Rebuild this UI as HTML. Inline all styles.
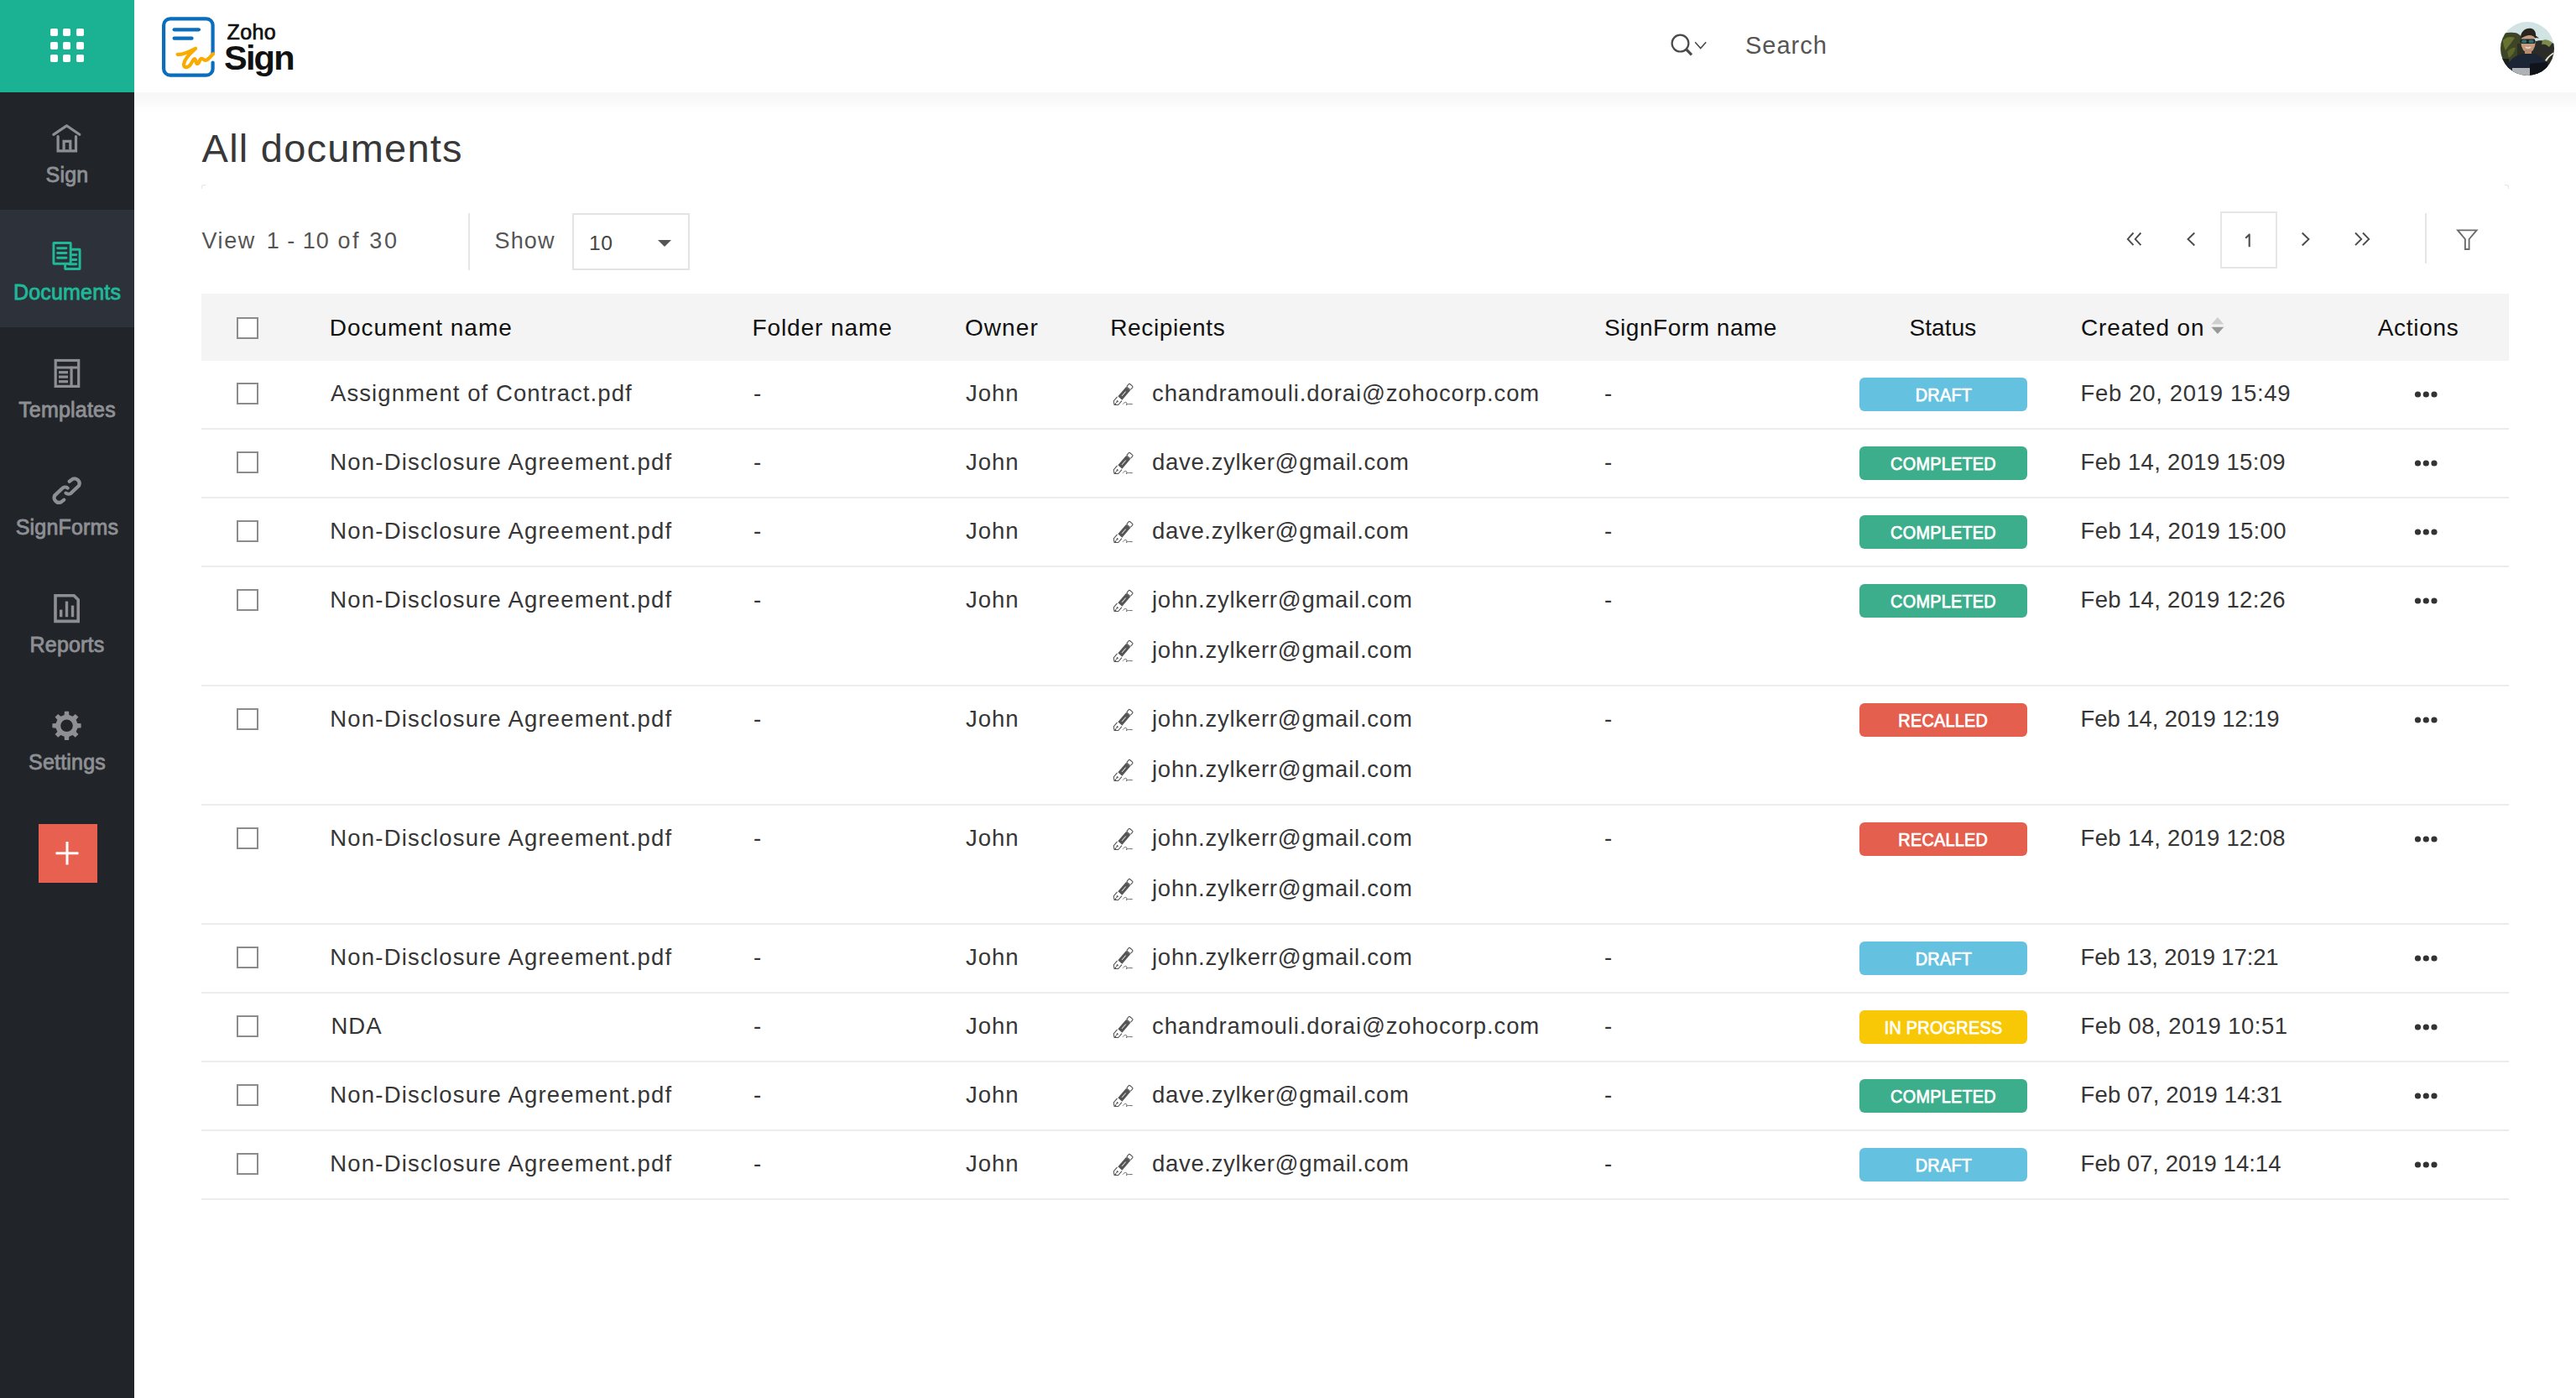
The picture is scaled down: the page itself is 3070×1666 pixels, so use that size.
<!DOCTYPE html>
<html><head><meta charset="utf-8"><title>Zoho Sign - All documents</title>
<style>
*{box-sizing:border-box;margin:0;padding:0}
html,body{width:3070px;height:1666px;overflow:hidden;background:#fff;font-family:"Liberation Sans",sans-serif;}
.a{position:absolute;white-space:pre}
#side{position:absolute;left:0;top:0;width:160px;height:1666px;background:#212428}
#apps{position:absolute;left:0;top:0;width:160px;height:110px;background:#1bb294}
.dot{position:absolute;width:9px;height:9px;background:#fff;border-radius:2px}
.nav{position:absolute;left:0;width:160px;height:140px}
.nav.act{background:#2d3139}
.nav svg{position:absolute;left:55px;top:30px}
.nav .lbl{position:absolute;left:0;width:160px;text-align:center;top:68px;line-height:60px;font-size:25px;color:#8e8f94;-webkit-text-stroke:0.85px #8e8f94;letter-spacing:0.2px}
.nav.act .lbl{color:#1fb898;-webkit-text-stroke:0.85px #1fb898}
#plus{position:absolute;left:46px;top:982px;width:70px;height:70px;background:#e8604f}
#hdr{position:absolute;left:160px;top:0;width:2910px;height:110px;background:#fff}
#shadow{position:absolute;left:160px;top:110px;width:2910px;height:23px;background:linear-gradient(#f7f7f7,#f9f9f9 40%,#fdfdfd 75%,#fff)}
.cb{position:absolute;width:26px;height:26px;border:2px solid #8c8c8c;background:#fff}
.t{position:absolute;font-size:27.5px;line-height:60px;color:#363636;white-space:pre;letter-spacing:1px}
.badge{position:absolute;width:200px;height:40px;border-radius:6px;color:#fff;text-align:center;white-space:pre}
.badge span{display:inline-block;font-size:21.5px;line-height:40px;transform:scaleX(0.925);-webkit-text-stroke:0.75px #fff;letter-spacing:0.25px;position:relative;top:1px}
</style></head>
<body>
<div id="side"><div id="apps"><div class="dot" style="left:59.5px;top:34px"></div><div class="dot" style="left:75px;top:34px"></div><div class="dot" style="left:90.5px;top:34px"></div><div class="dot" style="left:59.5px;top:49.5px"></div><div class="dot" style="left:75px;top:49.5px"></div><div class="dot" style="left:90.5px;top:49.5px"></div><div class="dot" style="left:59.5px;top:65px"></div><div class="dot" style="left:75px;top:65px"></div><div class="dot" style="left:90.5px;top:65px"></div></div><div class="nav" style="top:110px"><svg width="50" height="50" viewBox="0 0 50 50"><g fill="none" stroke="#8e8f94" stroke-width="3.2">
<polyline points="8.8,20.3 24.4,9.8 39.8,20.3" stroke-linecap="round" stroke-linejoin="round"/>
<polyline points="14.1,22.6 14.1,39.8 35.5,39.8 35.5,22.6" stroke-linecap="round"/>
<polyline points="21.1,38.5 21.1,28.4 28.8,28.4 28.8,38.5"/></g></svg><div class="lbl">Sign</div></div><div class="nav act" style="top:250px"><svg width="50" height="50" viewBox="0 0 50 50"><g fill="none" stroke="#1fb898" stroke-width="2.9" stroke-linejoin="round">
<rect x="22.6" y="17.3" width="17.5" height="23.2" rx="0.4"/>
<rect x="8.9" y="9.5" width="20.3" height="24.7" rx="0.4" fill="#2d3139"/>
<g stroke-linecap="round"><line x1="13.6" y1="15.7" x2="23.9" y2="15.7"/><line x1="13.6" y1="21.5" x2="23.9" y2="21.5"/><line x1="13.6" y1="27.3" x2="23.9" y2="27.3"/>
<line x1="30.5" y1="23.6" x2="35.8" y2="23.6"/><line x1="30.5" y1="29.5" x2="35.8" y2="29.5"/><line x1="27" y1="34.8" x2="35.8" y2="34.8"/></g></g></svg><div class="lbl">Documents</div></div><div class="nav" style="top:390px"><svg width="50" height="50" viewBox="0 0 50 50"><g fill="none" stroke="#8e8f94" stroke-width="3.2">
<rect x="11.2" y="9.5" width="27.5" height="30.9"/>
<line x1="12.6" y1="18" x2="37.3" y2="18" stroke-linecap="round"/>
<line x1="30.1" y1="18" x2="30.1" y2="38.6" stroke-linecap="round"/>
<line x1="15" y1="23.7" x2="26" y2="23.7"/><line x1="15" y1="29.1" x2="26" y2="29.1"/><line x1="15" y1="34.7" x2="26" y2="34.7"/></g></svg><div class="lbl">Templates</div></div><div class="nav" style="top:530px"><svg width="50" height="50" viewBox="0 0 50 50"><g fill="none" stroke="#8e8f94" stroke-width="4.2" stroke-linecap="round">
<path d="M21.3 35.6 L17.4 38.6 A5.9 5.9 0 0 1 10.1 30.6 L18.6 22.6 A5.2 5.2 0 0 1 25.7 21.6"/>
<path d="M27.6 13.8 L31.6 10.8 A5.9 5.9 0 0 1 39.1 18.8 L30.6 26.8 A5.2 5.2 0 0 1 23.5 27.6"/></g></svg><div class="lbl">SignForms</div></div><div class="nav" style="top:670px"><svg width="50" height="50" viewBox="0 0 50 50"><g fill="none" stroke="#8e8f94" stroke-width="3.6">
<polygon points="11,9.8 33.2,9.8 38.2,14.8 38.2,40.4 11,40.4"/></g>
<g fill="#8e8f94"><rect x="16" y="26.6" width="3.4" height="8.6"/><rect x="22.8" y="16.6" width="3.4" height="18.6"/><rect x="29.8" y="21.6" width="3.4" height="13.6"/></g></svg><div class="lbl">Reports</div></div><div class="nav" style="top:810px"><svg width="50" height="50" viewBox="0 0 50 50"><path fill="#8e8f94" fill-rule="evenodd" d="M21.64,11.91 L21.94,7.69 L27.06,7.69 L27.36,11.91 L31.59,13.67 L34.79,10.89 L38.41,14.51 L35.63,17.71 L37.39,21.94 L41.61,22.24 L41.61,27.36 L37.39,27.66 L35.63,31.89 L38.41,35.09 L34.79,38.71 L31.59,35.93 L27.36,37.69 L27.06,41.91 L21.94,41.91 L21.64,37.69 L17.41,35.93 L14.21,38.71 L10.59,35.09 L13.37,31.89 L11.61,27.66 L7.39,27.36 L7.39,22.24 L11.61,21.94 L13.37,17.71 L10.59,14.51 L14.21,10.89 L17.41,13.67 Z M31.8,24.8 A7.3 7.3 0 1 0 17.2,24.8 A7.3 7.3 0 1 0 31.8,24.8 Z"/></svg><div class="lbl">Settings</div></div><div id="plus"><svg width="70" height="70" viewBox="0 0 70 70"><g stroke="#fff" stroke-width="3"><line x1="20.5" y1="34.8" x2="47.5" y2="34.8"/><line x1="34" y1="21" x2="34" y2="48.5"/></g></svg></div></div>
<div id="hdr"></div><div id="shadow"></div><svg class="a" style="left:185px;top:15px" width="80" height="80" viewBox="0 0 80 80">
<g fill="none" stroke-linecap="round" stroke-linejoin="round">
<path d="M68.6 48.6 V15 A7.6 7.6 0 0 0 61 7.4 H17.7 A7.6 7.6 0 0 0 10.1 15 V67 A7.6 7.6 0 0 0 17.7 74.6 H61 A7.6 7.6 0 0 0 68.6 67 V59.6" stroke="#0a6ebd" stroke-width="4.2"/>
<line x1="22.7" y1="20.3" x2="51.9" y2="20.3" stroke="#0a6ebd" stroke-width="4.3"/>
<line x1="22.7" y1="30.7" x2="43.5" y2="30.7" stroke="#0a6ebd" stroke-width="4.3"/>
<path d="M26.6 49.9 C32.5 50.5 40 47 48 42.8 C42 48 34.5 56 34 61.5 C34 66 38.5 66.5 42 62 L45.6 56 C47 54 48.2 56 48.6 59 C49.5 62 51.5 61.5 53 57 C54.5 53.5 56 55 58.5 56.5 C62 58 65.5 53 69 49.3" stroke="#f9ab00" stroke-width="4.2"/>
</g></svg><div class="a" style="left:270.5px;top:25.7px;font-size:25px;line-height:25px;color:#111;-webkit-text-stroke:0.7px #111;letter-spacing:0.4px">Zoho</div><div class="a" style="left:267px;top:47.5px;font-size:41.5px;line-height:41.5px;font-weight:bold;color:#111;letter-spacing:-1.8px">Sign</div><svg class="a" style="left:1985px;top:35px" width="55" height="40" viewBox="0 0 55 40">
<circle cx="17.5" cy="16.6" r="9.9" fill="none" stroke="#4a4a4a" stroke-width="2.2"/>
<line x1="24.2" y1="23.3" x2="31" y2="30.3" stroke="#4a4a4a" stroke-width="3.2"/>
<polyline points="35.2,15.2 41.7,22.6 48.2,15.2" fill="none" stroke="#4a4a4a" stroke-width="1.6"/></svg><div class="a" style="left:2080px;top:34px;font-size:29px;line-height:40px;color:#555;letter-spacing:1px">Search</div><svg class="a" style="left:2980px;top:26px" width="64" height="64" viewBox="0 0 64 64">
<defs><clipPath id="cc"><circle cx="32" cy="32" r="32"/></clipPath></defs>
<g clip-path="url(#cc)">
<rect width="64" height="64" fill="#d2e3e3"/>
<path d="M0 16 C4 13 10 12 16 13 C20 13 23 15 25 18 L27 40 L18 52 L0 58 Z" fill="#3e4526"/>
<path d="M3 22 C7 18 12 17 17 19 C14 24 10 28 6 34 C4 30 3 26 3 22 Z" fill="#66732f"/>
<path d="M8 36 C11 32 15 30 18 31 C17 36 14 40 10 43 Z" fill="#5a662a"/>
<rect x="20" y="26" width="24" height="16" fill="#2c3023"/>
<path d="M40 24 C46 21 54 22 64 26 L64 64 L40 64 Z" fill="#2b2c27"/>
<path d="M50 22 C54 20 58 22 62 25 L58 30 C55 27 52 26 49 27 Z" fill="#7d8a4a"/>
<path d="M53 46 C56 41 60 38 64 36 L64 38 C60 40 57 43 55 47 Z" fill="#e4e2cc"/>
<path d="M0 44 L10 44 L12 64 L0 64 Z" fill="#1c1f1c"/>
<ellipse cx="33" cy="25" rx="8.6" ry="11.5" fill="#c69a7f"/>
<rect x="29" y="33" width="8" height="6" fill="#b98b70"/>
<path d="M24.2 20 C23 11 31 6.5 37 8 C42 9.5 43 15 41.5 20 C39 15.5 33 14 24.2 20 Z" fill="#2a241f"/>
<path d="M40 15 L46 19.5 L41 19 Z" fill="#2a241f"/>
<rect x="23.5" y="20.6" width="18" height="5.4" rx="2.2" fill="#1a2226"/>
<rect x="25.2" y="21.6" width="6" height="3.6" rx="1.5" fill="#2f6f6a"/>
<rect x="33.6" y="21.6" width="6" height="3.6" rx="1.5" fill="#2f6f6a"/>
<path d="M30 30 C32 31.5 34 31.5 36 30" stroke="#f2e8e0" stroke-width="1.4" fill="none"/>
<path d="M5 64 C6 50 14 41 26 38 L40 38 C50 40 57 48 58 64 Z" fill="#1b2535"/>
<path d="M35 50 L56 48 L58 64 L35 64 Z" fill="#10141a"/>
<rect x="14" y="55" width="21" height="10" fill="#aeb2b4"/>
</g></svg>
<div class="a" style="left:240.6px;top:146.5px;font-size:47px;line-height:60px;color:#383838;letter-spacing:1.23px">All documents</div><div class="a" style="left:240.5px;top:266.5px;font-size:27px;line-height:40px;color:#555;letter-spacing:1.6px">View</div><div class="a" style="left:317.7px;top:266.5px;font-size:27px;line-height:40px;color:#555;letter-spacing:1px">1 - 10</div><div class="a" style="left:402.5px;top:266.5px;font-size:27px;line-height:40px;color:#555;letter-spacing:2.6px">of 30</div><div class="a" style="left:589.6px;top:266.5px;font-size:27px;line-height:40px;color:#555;letter-spacing:1.1px">Show</div><div class="a" style="left:558px;top:254px;width:2px;height:68px;background:#e6e6e6"></div><div class="a" style="left:682px;top:254px;width:140px;height:68px;border:2px solid #e3e3e3"></div><div class="a" style="left:702px;top:270.3px;font-size:24.6px;line-height:40px;color:#444;letter-spacing:0.5px">10</div><div class="a" style="left:784px;top:285.5px;width:0;height:0;border-left:8px solid transparent;border-right:8px solid transparent;border-top:8.5px solid #555"></div><svg class="a" style="left:2520px;top:250px" width="320" height="72" viewBox="2520 250 320 72">
<g fill="none" stroke="#4a4a4a" stroke-width="1.9">
<polyline points="2542.5,277.5 2535.8,284.9 2542.5,292.2"/><polyline points="2551.4,277.5 2544.7,284.9 2551.4,292.2"/>
<polyline points="2615.3,277.5 2607.5,285 2615.3,292.5"/>
<polyline points="2743.7,277.5 2751.5,285 2743.7,292.5"/>
<polyline points="2807,277.5 2814.2,284.9 2807,292.2"/><polyline points="2816,277.5 2823.2,284.9 2816,292.2"/>
</g></svg><div class="a" style="left:2646px;top:252px;width:68px;height:68px;border:2px solid #e6e6e6"></div><svg class="a" style="left:2660px;top:270px" width="30" height="30" viewBox="2660 270 30 30"><polyline points="2676.2,283.8 2680.7,279.4 2680.7,294.2" fill="none" stroke="#4d4d4d" stroke-width="2.1" stroke-linejoin="round"/></svg><div class="a" style="left:2890px;top:254px;width:2px;height:60px;background:#e6e6e6"></div><svg class="a" style="left:2920px;top:265px" width="40" height="40" viewBox="0 0 40 40"><polygon points="9,9.4 31.6,9.4 22.6,20 22.6,32 17.9,32 17.9,20" fill="none" stroke="#6b6b6b" stroke-width="1.9"/></svg><div class="a" style="left:240px;top:220px;width:5px;height:5px;border-left:1px solid #e6e6e6;border-top:1px solid #e6e6e6;border-top-left-radius:3px"></div><div class="a" style="left:2985px;top:220px;width:5px;height:5px;border-right:1px solid #e6e6e6;border-top:1px solid #e6e6e6;border-top-right-radius:3px"></div>
<div class="a" style="left:240px;top:350px;width:2750px;height:80px;background:#f4f4f4"></div><div class="cb" style="left:281.5px;top:378px"></div><div class="a" style="left:392.7px;top:361px;font-size:28px;line-height:60px;color:#111;letter-spacing:0.97px">Document name</div><div class="a" style="left:896.4px;top:361px;font-size:28px;line-height:60px;color:#111;letter-spacing:0.92px">Folder name</div><div class="a" style="left:1149.9px;top:361px;font-size:28px;line-height:60px;color:#111;letter-spacing:1.1px">Owner</div><div class="a" style="left:1323.2px;top:361px;font-size:28px;line-height:60px;color:#111;letter-spacing:0.64px">Recipients</div><div class="a" style="left:1911.9px;top:361px;font-size:28px;line-height:60px;color:#111;letter-spacing:0.53px">SignForm name</div><div class="a" style="left:2275.4px;top:361px;font-size:28px;line-height:60px;color:#111;letter-spacing:0.12px">Status</div><div class="a" style="left:2480px;top:361px;font-size:28px;line-height:60px;color:#111;letter-spacing:0.89px">Created on</div><div class="a" style="left:2833.7px;top:361px;font-size:28px;line-height:60px;color:#111;letter-spacing:0.7px">Actions</div><svg class="a" style="left:2630px;top:372px" width="24" height="32" viewBox="0 0 24 32"><polygon points="5.4,14.4 12.9,5.9 20.3,14.4" fill="#cfcfcf"/><polygon points="5.4,17.8 12.9,26 20.3,17.8" fill="#999"/></svg><div class="a" style="left:240px;top:510px;width:2750px;height:2px;background:#ececec"></div><div class="cb" style="left:281.5px;top:456px"></div><div class="t" style="left:394px;top:439px;letter-spacing:1.08px">Assignment of Contract.pdf</div><div class="t" style="left:898px;top:439px">-</div><div class="t" style="left:1151px;top:439px">John</div><svg class="a" style="left:1320px;top:449px" width="40" height="40" viewBox="0 0 40 40"><g fill="#555" stroke="#555">
<g transform="translate(8,33.5) rotate(-49.5)">
<rect x="10.5" y="-3.3" width="15" height="6.6" stroke="none"/>
<rect x="26" y="-3" width="5" height="6" rx="1.2" fill="none" stroke-width="1.1"/>
<line x1="14" y1="0" x2="21" y2="0" stroke="#fff" stroke-width="0.9"/>
<path d="M0 0 L3 -3.6 L9.6 -3.6 M0 0 L3 3.6 L9.6 3.6" fill="none" stroke-width="1.1"/>
<circle cx="5.6" cy="0" r="1.1" stroke="none"/>
<line x1="0.5" y1="0" x2="5" y2="0" stroke-width="0.8"/>
</g>
<path d="M18 32.6 C20 30.5 22 29.6 22.8 31.2 C23 32.5 22.4 33.8 22.4 33.8 C23.5 32 25 32.6 29.7 32.6" fill="none" stroke-width="0.9"/>
<path d="M7.3 34.2 L9.5 31.5 L10.5 32.8 Z" stroke="none"/>
</g></svg><div class="t" style="left:1373px;top:439px;letter-spacing:0.89px">chandramouli.dorai@zohocorp.com</div><div class="t" style="left:1912px;top:439px">-</div><div class="badge" style="left:2216px;top:450px;background:#64c1df"><span>DRAFT</span></div><div class="t" style="left:2479.6px;top:439px;letter-spacing:0.67px">Feb 20, 2019 15:49</div><svg class="a" style="left:2870px;top:460px" width="40" height="20" viewBox="0 0 40 20"><g fill="#333"><circle cx="11.5" cy="10" r="3.6"/><circle cx="21.3" cy="10" r="3.6"/><circle cx="31" cy="10" r="3.6"/></g></svg><div class="a" style="left:240px;top:592px;width:2750px;height:2px;background:#ececec"></div><div class="cb" style="left:281.5px;top:538px"></div><div class="t" style="left:393.3px;top:521px;letter-spacing:1.2px">Non-Disclosure Agreement.pdf</div><div class="t" style="left:898px;top:521px">-</div><div class="t" style="left:1151px;top:521px">John</div><svg class="a" style="left:1320px;top:531px" width="40" height="40" viewBox="0 0 40 40"><g fill="#555" stroke="#555">
<g transform="translate(8,33.5) rotate(-49.5)">
<rect x="10.5" y="-3.3" width="15" height="6.6" stroke="none"/>
<rect x="26" y="-3" width="5" height="6" rx="1.2" fill="none" stroke-width="1.1"/>
<line x1="14" y1="0" x2="21" y2="0" stroke="#fff" stroke-width="0.9"/>
<path d="M0 0 L3 -3.6 L9.6 -3.6 M0 0 L3 3.6 L9.6 3.6" fill="none" stroke-width="1.1"/>
<circle cx="5.6" cy="0" r="1.1" stroke="none"/>
<line x1="0.5" y1="0" x2="5" y2="0" stroke-width="0.8"/>
</g>
<path d="M18 32.6 C20 30.5 22 29.6 22.8 31.2 C23 32.5 22.4 33.8 22.4 33.8 C23.5 32 25 32.6 29.7 32.6" fill="none" stroke-width="0.9"/>
<path d="M7.3 34.2 L9.5 31.5 L10.5 32.8 Z" stroke="none"/>
</g></svg><div class="t" style="left:1373px;top:521px;letter-spacing:0.68px">dave.zylker@gmail.com</div><div class="t" style="left:1912px;top:521px">-</div><div class="badge" style="left:2216px;top:532px;background:#3dae8b"><span>COMPLETED</span></div><div class="t" style="left:2479.6px;top:521px;letter-spacing:0.32px">Feb 14, 2019 15:09</div><svg class="a" style="left:2870px;top:542px" width="40" height="20" viewBox="0 0 40 20"><g fill="#333"><circle cx="11.5" cy="10" r="3.6"/><circle cx="21.3" cy="10" r="3.6"/><circle cx="31" cy="10" r="3.6"/></g></svg><div class="a" style="left:240px;top:674px;width:2750px;height:2px;background:#ececec"></div><div class="cb" style="left:281.5px;top:620px"></div><div class="t" style="left:393.3px;top:603px;letter-spacing:1.2px">Non-Disclosure Agreement.pdf</div><div class="t" style="left:898px;top:603px">-</div><div class="t" style="left:1151px;top:603px">John</div><svg class="a" style="left:1320px;top:613px" width="40" height="40" viewBox="0 0 40 40"><g fill="#555" stroke="#555">
<g transform="translate(8,33.5) rotate(-49.5)">
<rect x="10.5" y="-3.3" width="15" height="6.6" stroke="none"/>
<rect x="26" y="-3" width="5" height="6" rx="1.2" fill="none" stroke-width="1.1"/>
<line x1="14" y1="0" x2="21" y2="0" stroke="#fff" stroke-width="0.9"/>
<path d="M0 0 L3 -3.6 L9.6 -3.6 M0 0 L3 3.6 L9.6 3.6" fill="none" stroke-width="1.1"/>
<circle cx="5.6" cy="0" r="1.1" stroke="none"/>
<line x1="0.5" y1="0" x2="5" y2="0" stroke-width="0.8"/>
</g>
<path d="M18 32.6 C20 30.5 22 29.6 22.8 31.2 C23 32.5 22.4 33.8 22.4 33.8 C23.5 32 25 32.6 29.7 32.6" fill="none" stroke-width="0.9"/>
<path d="M7.3 34.2 L9.5 31.5 L10.5 32.8 Z" stroke="none"/>
</g></svg><div class="t" style="left:1373px;top:603px;letter-spacing:0.68px">dave.zylker@gmail.com</div><div class="t" style="left:1912px;top:603px">-</div><div class="badge" style="left:2216px;top:614px;background:#3dae8b"><span>COMPLETED</span></div><div class="t" style="left:2479.6px;top:603px;letter-spacing:0.38px">Feb 14, 2019 15:00</div><svg class="a" style="left:2870px;top:624px" width="40" height="20" viewBox="0 0 40 20"><g fill="#333"><circle cx="11.5" cy="10" r="3.6"/><circle cx="21.3" cy="10" r="3.6"/><circle cx="31" cy="10" r="3.6"/></g></svg><div class="a" style="left:240px;top:816px;width:2750px;height:2px;background:#ececec"></div><div class="cb" style="left:281.5px;top:702px"></div><div class="t" style="left:393.3px;top:685px;letter-spacing:1.2px">Non-Disclosure Agreement.pdf</div><div class="t" style="left:898px;top:685px">-</div><div class="t" style="left:1151px;top:685px">John</div><svg class="a" style="left:1320px;top:695px" width="40" height="40" viewBox="0 0 40 40"><g fill="#555" stroke="#555">
<g transform="translate(8,33.5) rotate(-49.5)">
<rect x="10.5" y="-3.3" width="15" height="6.6" stroke="none"/>
<rect x="26" y="-3" width="5" height="6" rx="1.2" fill="none" stroke-width="1.1"/>
<line x1="14" y1="0" x2="21" y2="0" stroke="#fff" stroke-width="0.9"/>
<path d="M0 0 L3 -3.6 L9.6 -3.6 M0 0 L3 3.6 L9.6 3.6" fill="none" stroke-width="1.1"/>
<circle cx="5.6" cy="0" r="1.1" stroke="none"/>
<line x1="0.5" y1="0" x2="5" y2="0" stroke-width="0.8"/>
</g>
<path d="M18 32.6 C20 30.5 22 29.6 22.8 31.2 C23 32.5 22.4 33.8 22.4 33.8 C23.5 32 25 32.6 29.7 32.6" fill="none" stroke-width="0.9"/>
<path d="M7.3 34.2 L9.5 31.5 L10.5 32.8 Z" stroke="none"/>
</g></svg><div class="t" style="left:1373px;top:685px;letter-spacing:0.76px">john.zylkerr@gmail.com</div><svg class="a" style="left:1320px;top:755px" width="40" height="40" viewBox="0 0 40 40"><g fill="#555" stroke="#555">
<g transform="translate(8,33.5) rotate(-49.5)">
<rect x="10.5" y="-3.3" width="15" height="6.6" stroke="none"/>
<rect x="26" y="-3" width="5" height="6" rx="1.2" fill="none" stroke-width="1.1"/>
<line x1="14" y1="0" x2="21" y2="0" stroke="#fff" stroke-width="0.9"/>
<path d="M0 0 L3 -3.6 L9.6 -3.6 M0 0 L3 3.6 L9.6 3.6" fill="none" stroke-width="1.1"/>
<circle cx="5.6" cy="0" r="1.1" stroke="none"/>
<line x1="0.5" y1="0" x2="5" y2="0" stroke-width="0.8"/>
</g>
<path d="M18 32.6 C20 30.5 22 29.6 22.8 31.2 C23 32.5 22.4 33.8 22.4 33.8 C23.5 32 25 32.6 29.7 32.6" fill="none" stroke-width="0.9"/>
<path d="M7.3 34.2 L9.5 31.5 L10.5 32.8 Z" stroke="none"/>
</g></svg><div class="t" style="left:1373px;top:745px;letter-spacing:0.76px">john.zylkerr@gmail.com</div><div class="t" style="left:1912px;top:685px">-</div><div class="badge" style="left:2216px;top:696px;background:#3dae8b"><span>COMPLETED</span></div><div class="t" style="left:2479.6px;top:685px;letter-spacing:0.32px">Feb 14, 2019 12:26</div><svg class="a" style="left:2870px;top:706px" width="40" height="20" viewBox="0 0 40 20"><g fill="#333"><circle cx="11.5" cy="10" r="3.6"/><circle cx="21.3" cy="10" r="3.6"/><circle cx="31" cy="10" r="3.6"/></g></svg><div class="a" style="left:240px;top:958px;width:2750px;height:2px;background:#ececec"></div><div class="cb" style="left:281.5px;top:844px"></div><div class="t" style="left:393.3px;top:827px;letter-spacing:1.2px">Non-Disclosure Agreement.pdf</div><div class="t" style="left:898px;top:827px">-</div><div class="t" style="left:1151px;top:827px">John</div><svg class="a" style="left:1320px;top:837px" width="40" height="40" viewBox="0 0 40 40"><g fill="#555" stroke="#555">
<g transform="translate(8,33.5) rotate(-49.5)">
<rect x="10.5" y="-3.3" width="15" height="6.6" stroke="none"/>
<rect x="26" y="-3" width="5" height="6" rx="1.2" fill="none" stroke-width="1.1"/>
<line x1="14" y1="0" x2="21" y2="0" stroke="#fff" stroke-width="0.9"/>
<path d="M0 0 L3 -3.6 L9.6 -3.6 M0 0 L3 3.6 L9.6 3.6" fill="none" stroke-width="1.1"/>
<circle cx="5.6" cy="0" r="1.1" stroke="none"/>
<line x1="0.5" y1="0" x2="5" y2="0" stroke-width="0.8"/>
</g>
<path d="M18 32.6 C20 30.5 22 29.6 22.8 31.2 C23 32.5 22.4 33.8 22.4 33.8 C23.5 32 25 32.6 29.7 32.6" fill="none" stroke-width="0.9"/>
<path d="M7.3 34.2 L9.5 31.5 L10.5 32.8 Z" stroke="none"/>
</g></svg><div class="t" style="left:1373px;top:827px;letter-spacing:0.76px">john.zylkerr@gmail.com</div><svg class="a" style="left:1320px;top:897px" width="40" height="40" viewBox="0 0 40 40"><g fill="#555" stroke="#555">
<g transform="translate(8,33.5) rotate(-49.5)">
<rect x="10.5" y="-3.3" width="15" height="6.6" stroke="none"/>
<rect x="26" y="-3" width="5" height="6" rx="1.2" fill="none" stroke-width="1.1"/>
<line x1="14" y1="0" x2="21" y2="0" stroke="#fff" stroke-width="0.9"/>
<path d="M0 0 L3 -3.6 L9.6 -3.6 M0 0 L3 3.6 L9.6 3.6" fill="none" stroke-width="1.1"/>
<circle cx="5.6" cy="0" r="1.1" stroke="none"/>
<line x1="0.5" y1="0" x2="5" y2="0" stroke-width="0.8"/>
</g>
<path d="M18 32.6 C20 30.5 22 29.6 22.8 31.2 C23 32.5 22.4 33.8 22.4 33.8 C23.5 32 25 32.6 29.7 32.6" fill="none" stroke-width="0.9"/>
<path d="M7.3 34.2 L9.5 31.5 L10.5 32.8 Z" stroke="none"/>
</g></svg><div class="t" style="left:1373px;top:887px;letter-spacing:0.76px">john.zylkerr@gmail.com</div><div class="t" style="left:1912px;top:827px">-</div><div class="badge" style="left:2216px;top:838px;background:#e55f4f"><span>RECALLED</span></div><div class="t" style="left:2479.6px;top:827px;letter-spacing:-0.09px">Feb 14, 2019 12:19</div><svg class="a" style="left:2870px;top:848px" width="40" height="20" viewBox="0 0 40 20"><g fill="#333"><circle cx="11.5" cy="10" r="3.6"/><circle cx="21.3" cy="10" r="3.6"/><circle cx="31" cy="10" r="3.6"/></g></svg><div class="a" style="left:240px;top:1100px;width:2750px;height:2px;background:#ececec"></div><div class="cb" style="left:281.5px;top:986px"></div><div class="t" style="left:393.3px;top:969px;letter-spacing:1.2px">Non-Disclosure Agreement.pdf</div><div class="t" style="left:898px;top:969px">-</div><div class="t" style="left:1151px;top:969px">John</div><svg class="a" style="left:1320px;top:979px" width="40" height="40" viewBox="0 0 40 40"><g fill="#555" stroke="#555">
<g transform="translate(8,33.5) rotate(-49.5)">
<rect x="10.5" y="-3.3" width="15" height="6.6" stroke="none"/>
<rect x="26" y="-3" width="5" height="6" rx="1.2" fill="none" stroke-width="1.1"/>
<line x1="14" y1="0" x2="21" y2="0" stroke="#fff" stroke-width="0.9"/>
<path d="M0 0 L3 -3.6 L9.6 -3.6 M0 0 L3 3.6 L9.6 3.6" fill="none" stroke-width="1.1"/>
<circle cx="5.6" cy="0" r="1.1" stroke="none"/>
<line x1="0.5" y1="0" x2="5" y2="0" stroke-width="0.8"/>
</g>
<path d="M18 32.6 C20 30.5 22 29.6 22.8 31.2 C23 32.5 22.4 33.8 22.4 33.8 C23.5 32 25 32.6 29.7 32.6" fill="none" stroke-width="0.9"/>
<path d="M7.3 34.2 L9.5 31.5 L10.5 32.8 Z" stroke="none"/>
</g></svg><div class="t" style="left:1373px;top:969px;letter-spacing:0.76px">john.zylkerr@gmail.com</div><svg class="a" style="left:1320px;top:1039px" width="40" height="40" viewBox="0 0 40 40"><g fill="#555" stroke="#555">
<g transform="translate(8,33.5) rotate(-49.5)">
<rect x="10.5" y="-3.3" width="15" height="6.6" stroke="none"/>
<rect x="26" y="-3" width="5" height="6" rx="1.2" fill="none" stroke-width="1.1"/>
<line x1="14" y1="0" x2="21" y2="0" stroke="#fff" stroke-width="0.9"/>
<path d="M0 0 L3 -3.6 L9.6 -3.6 M0 0 L3 3.6 L9.6 3.6" fill="none" stroke-width="1.1"/>
<circle cx="5.6" cy="0" r="1.1" stroke="none"/>
<line x1="0.5" y1="0" x2="5" y2="0" stroke-width="0.8"/>
</g>
<path d="M18 32.6 C20 30.5 22 29.6 22.8 31.2 C23 32.5 22.4 33.8 22.4 33.8 C23.5 32 25 32.6 29.7 32.6" fill="none" stroke-width="0.9"/>
<path d="M7.3 34.2 L9.5 31.5 L10.5 32.8 Z" stroke="none"/>
</g></svg><div class="t" style="left:1373px;top:1029px;letter-spacing:0.76px">john.zylkerr@gmail.com</div><div class="t" style="left:1912px;top:969px">-</div><div class="badge" style="left:2216px;top:980px;background:#e55f4f"><span>RECALLED</span></div><div class="t" style="left:2479.6px;top:969px;letter-spacing:0.32px">Feb 14, 2019 12:08</div><svg class="a" style="left:2870px;top:990px" width="40" height="20" viewBox="0 0 40 20"><g fill="#333"><circle cx="11.5" cy="10" r="3.6"/><circle cx="21.3" cy="10" r="3.6"/><circle cx="31" cy="10" r="3.6"/></g></svg><div class="a" style="left:240px;top:1182px;width:2750px;height:2px;background:#ececec"></div><div class="cb" style="left:281.5px;top:1128px"></div><div class="t" style="left:393.3px;top:1111px;letter-spacing:1.2px">Non-Disclosure Agreement.pdf</div><div class="t" style="left:898px;top:1111px">-</div><div class="t" style="left:1151px;top:1111px">John</div><svg class="a" style="left:1320px;top:1121px" width="40" height="40" viewBox="0 0 40 40"><g fill="#555" stroke="#555">
<g transform="translate(8,33.5) rotate(-49.5)">
<rect x="10.5" y="-3.3" width="15" height="6.6" stroke="none"/>
<rect x="26" y="-3" width="5" height="6" rx="1.2" fill="none" stroke-width="1.1"/>
<line x1="14" y1="0" x2="21" y2="0" stroke="#fff" stroke-width="0.9"/>
<path d="M0 0 L3 -3.6 L9.6 -3.6 M0 0 L3 3.6 L9.6 3.6" fill="none" stroke-width="1.1"/>
<circle cx="5.6" cy="0" r="1.1" stroke="none"/>
<line x1="0.5" y1="0" x2="5" y2="0" stroke-width="0.8"/>
</g>
<path d="M18 32.6 C20 30.5 22 29.6 22.8 31.2 C23 32.5 22.4 33.8 22.4 33.8 C23.5 32 25 32.6 29.7 32.6" fill="none" stroke-width="0.9"/>
<path d="M7.3 34.2 L9.5 31.5 L10.5 32.8 Z" stroke="none"/>
</g></svg><div class="t" style="left:1373px;top:1111px;letter-spacing:0.76px">john.zylkerr@gmail.com</div><div class="t" style="left:1912px;top:1111px">-</div><div class="badge" style="left:2216px;top:1122px;background:#64c1df"><span>DRAFT</span></div><div class="t" style="left:2479.6px;top:1111px;letter-spacing:-0.15px">Feb 13, 2019 17:21</div><svg class="a" style="left:2870px;top:1132px" width="40" height="20" viewBox="0 0 40 20"><g fill="#333"><circle cx="11.5" cy="10" r="3.6"/><circle cx="21.3" cy="10" r="3.6"/><circle cx="31" cy="10" r="3.6"/></g></svg><div class="a" style="left:240px;top:1264px;width:2750px;height:2px;background:#ececec"></div><div class="cb" style="left:281.5px;top:1210px"></div><div class="t" style="left:394.5px;top:1193px;letter-spacing:1.0px">NDA</div><div class="t" style="left:898px;top:1193px">-</div><div class="t" style="left:1151px;top:1193px">John</div><svg class="a" style="left:1320px;top:1203px" width="40" height="40" viewBox="0 0 40 40"><g fill="#555" stroke="#555">
<g transform="translate(8,33.5) rotate(-49.5)">
<rect x="10.5" y="-3.3" width="15" height="6.6" stroke="none"/>
<rect x="26" y="-3" width="5" height="6" rx="1.2" fill="none" stroke-width="1.1"/>
<line x1="14" y1="0" x2="21" y2="0" stroke="#fff" stroke-width="0.9"/>
<path d="M0 0 L3 -3.6 L9.6 -3.6 M0 0 L3 3.6 L9.6 3.6" fill="none" stroke-width="1.1"/>
<circle cx="5.6" cy="0" r="1.1" stroke="none"/>
<line x1="0.5" y1="0" x2="5" y2="0" stroke-width="0.8"/>
</g>
<path d="M18 32.6 C20 30.5 22 29.6 22.8 31.2 C23 32.5 22.4 33.8 22.4 33.8 C23.5 32 25 32.6 29.7 32.6" fill="none" stroke-width="0.9"/>
<path d="M7.3 34.2 L9.5 31.5 L10.5 32.8 Z" stroke="none"/>
</g></svg><div class="t" style="left:1373px;top:1193px;letter-spacing:0.89px">chandramouli.dorai@zohocorp.com</div><div class="t" style="left:1912px;top:1193px">-</div><div class="badge" style="left:2216px;top:1204px;background:#f8c807"><span>IN PROGRESS</span></div><div class="t" style="left:2479.6px;top:1193px;letter-spacing:0.46px">Feb 08, 2019 10:51</div><svg class="a" style="left:2870px;top:1214px" width="40" height="20" viewBox="0 0 40 20"><g fill="#333"><circle cx="11.5" cy="10" r="3.6"/><circle cx="21.3" cy="10" r="3.6"/><circle cx="31" cy="10" r="3.6"/></g></svg><div class="a" style="left:240px;top:1346px;width:2750px;height:2px;background:#ececec"></div><div class="cb" style="left:281.5px;top:1292px"></div><div class="t" style="left:393.3px;top:1275px;letter-spacing:1.2px">Non-Disclosure Agreement.pdf</div><div class="t" style="left:898px;top:1275px">-</div><div class="t" style="left:1151px;top:1275px">John</div><svg class="a" style="left:1320px;top:1285px" width="40" height="40" viewBox="0 0 40 40"><g fill="#555" stroke="#555">
<g transform="translate(8,33.5) rotate(-49.5)">
<rect x="10.5" y="-3.3" width="15" height="6.6" stroke="none"/>
<rect x="26" y="-3" width="5" height="6" rx="1.2" fill="none" stroke-width="1.1"/>
<line x1="14" y1="0" x2="21" y2="0" stroke="#fff" stroke-width="0.9"/>
<path d="M0 0 L3 -3.6 L9.6 -3.6 M0 0 L3 3.6 L9.6 3.6" fill="none" stroke-width="1.1"/>
<circle cx="5.6" cy="0" r="1.1" stroke="none"/>
<line x1="0.5" y1="0" x2="5" y2="0" stroke-width="0.8"/>
</g>
<path d="M18 32.6 C20 30.5 22 29.6 22.8 31.2 C23 32.5 22.4 33.8 22.4 33.8 C23.5 32 25 32.6 29.7 32.6" fill="none" stroke-width="0.9"/>
<path d="M7.3 34.2 L9.5 31.5 L10.5 32.8 Z" stroke="none"/>
</g></svg><div class="t" style="left:1373px;top:1275px;letter-spacing:0.68px">dave.zylker@gmail.com</div><div class="t" style="left:1912px;top:1275px">-</div><div class="badge" style="left:2216px;top:1286px;background:#3dae8b"><span>COMPLETED</span></div><div class="t" style="left:2479.6px;top:1275px;letter-spacing:0.11px">Feb 07, 2019 14:31</div><svg class="a" style="left:2870px;top:1296px" width="40" height="20" viewBox="0 0 40 20"><g fill="#333"><circle cx="11.5" cy="10" r="3.6"/><circle cx="21.3" cy="10" r="3.6"/><circle cx="31" cy="10" r="3.6"/></g></svg><div class="a" style="left:240px;top:1428px;width:2750px;height:2px;background:#ececec"></div><div class="cb" style="left:281.5px;top:1374px"></div><div class="t" style="left:393.3px;top:1357px;letter-spacing:1.2px">Non-Disclosure Agreement.pdf</div><div class="t" style="left:898px;top:1357px">-</div><div class="t" style="left:1151px;top:1357px">John</div><svg class="a" style="left:1320px;top:1367px" width="40" height="40" viewBox="0 0 40 40"><g fill="#555" stroke="#555">
<g transform="translate(8,33.5) rotate(-49.5)">
<rect x="10.5" y="-3.3" width="15" height="6.6" stroke="none"/>
<rect x="26" y="-3" width="5" height="6" rx="1.2" fill="none" stroke-width="1.1"/>
<line x1="14" y1="0" x2="21" y2="0" stroke="#fff" stroke-width="0.9"/>
<path d="M0 0 L3 -3.6 L9.6 -3.6 M0 0 L3 3.6 L9.6 3.6" fill="none" stroke-width="1.1"/>
<circle cx="5.6" cy="0" r="1.1" stroke="none"/>
<line x1="0.5" y1="0" x2="5" y2="0" stroke-width="0.8"/>
</g>
<path d="M18 32.6 C20 30.5 22 29.6 22.8 31.2 C23 32.5 22.4 33.8 22.4 33.8 C23.5 32 25 32.6 29.7 32.6" fill="none" stroke-width="0.9"/>
<path d="M7.3 34.2 L9.5 31.5 L10.5 32.8 Z" stroke="none"/>
</g></svg><div class="t" style="left:1373px;top:1357px;letter-spacing:0.68px">dave.zylker@gmail.com</div><div class="t" style="left:1912px;top:1357px">-</div><div class="badge" style="left:2216px;top:1368px;background:#64c1df"><span>DRAFT</span></div><div class="t" style="left:2479.6px;top:1357px;letter-spacing:0.02px">Feb 07, 2019 14:14</div><svg class="a" style="left:2870px;top:1378px" width="40" height="20" viewBox="0 0 40 20"><g fill="#333"><circle cx="11.5" cy="10" r="3.6"/><circle cx="21.3" cy="10" r="3.6"/><circle cx="31" cy="10" r="3.6"/></g></svg>
</body></html>
